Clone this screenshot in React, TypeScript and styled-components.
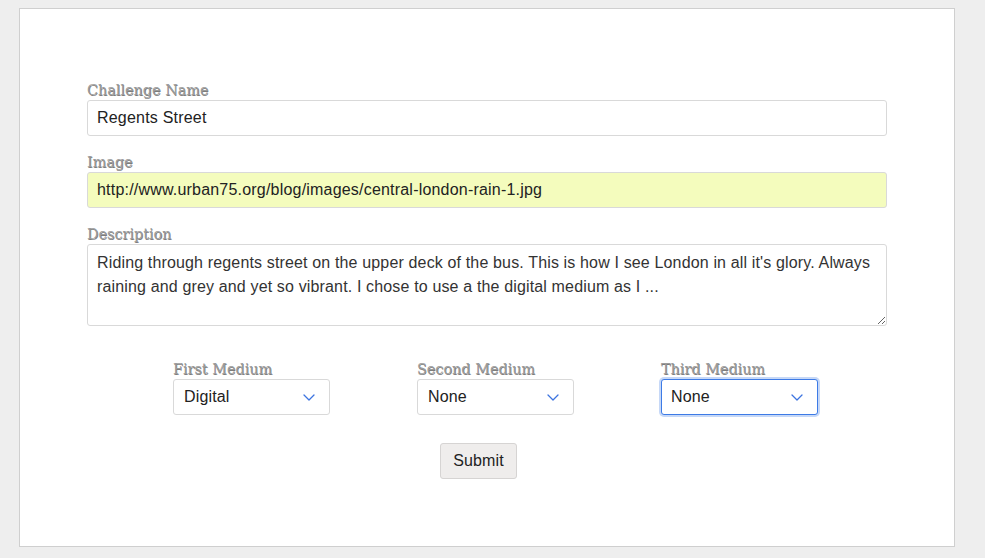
import React from "react";
import styled, { createGlobalStyle } from "styled-components";

const GlobalStyle = createGlobalStyle`
  html, body {
    margin: 0;
    padding: 0;
    background: #eeeeee;
  }
  body {
    font-family: "Liberation Sans", Arial, sans-serif;
  }
`;

const Page = styled.div`
  padding: 8px 0 0 19px;
  min-height: 558px;
  box-sizing: border-box;
`;

const Card = styled.div`
  width: 936px;
  height: 539px;
  box-sizing: border-box;
  background: #ffffff;
  border: 1px solid #cfcfcf;
  padding-top: 73px;
  display: flex;
  justify-content: center;
`;

const Form = styled.form`
  width: 800px;
  display: flex;
  flex-direction: column;
`;

const Group = styled.div<{ $last?: boolean }>`
  display: flex;
  flex-direction: column;
  margin-bottom: ${(p) => (p.$last ? "0" : "18px")};
`;

const Label = styled.label`
  display: block;
  font-family: "DejaVu Serif", "Liberation Serif", serif;
  font-weight: normal;
  font-size: 14.4px;
  line-height: 17px;
  height: 18px;
  color: #9c9c9c;
  text-shadow: 0.6px 0.6px 0 #7c7c7c;
  white-space: nowrap;
`;

const TextInput = styled.input<{ $autofill?: boolean }>`
  box-sizing: border-box;
  width: 100%;
  height: 36px;
  padding: 0 9px;
  font-family: "Liberation Sans", Arial, sans-serif;
  font-size: 16px;
  letter-spacing: 0.2px;
  color: #222222;
  background: ${(p) => (p.$autofill ? "#f4fcbd" : "#ffffff")};
  border: 1px solid #d9d9d9;
  border-radius: 3px;
  outline: none;
`;

const TextArea = styled.textarea`
  box-sizing: border-box;
  width: 100%;
  height: 82px;
  padding: 6px 9px;
  font-family: "Liberation Sans", Arial, sans-serif;
  font-size: 16px;
  letter-spacing: 0.15px;
  line-height: 24px;
  color: #333333;
  background: #ffffff;
  border: 1px solid #d9d9d9;
  border-radius: 3px;
  outline: none;
  resize: vertical;
  overflow: hidden;
`;

const MediumRow = styled.div`
  display: flex;
  gap: 87px;
  padding-left: 86px;
  margin-top: 35px;
`;

const MediumCol = styled.div`
  display: flex;
  flex-direction: column;
  width: 157px;
`;

const SelectBox = styled.div<{ $focused?: boolean }>`
  box-sizing: border-box;
  height: 36px;
  display: flex;
  align-items: center;
  justify-content: space-between;
  padding: 0 14px 0 ${(p) => (p.$focused ? "9px" : "10px")};
  border: ${(p) => (p.$focused ? "1.5px solid #3d7be6" : "1px solid #d9d9d9")};
  border-radius: 3px;
  box-shadow: ${(p) => (p.$focused ? "0 0 0 2px #c6d8f7" : "none")};
  font-size: 16px;
  letter-spacing: 0.15px;
  color: #222222;
  background: #ffffff;
`;

const ButtonRow = styled.div`
  display: flex;
  padding-left: 353px;
  margin-top: 28px;
`;

const SubmitButton = styled.button`
  box-sizing: border-box;
  width: 77px;
  height: 36px;
  font-family: "Liberation Sans", Arial, sans-serif;
  font-size: 16px;
  letter-spacing: 0.15px;
  color: #222222;
  background: #efedec;
  border: 1px solid #d6d4d3;
  border-radius: 3px;
`;

const Chevron = () => (
  <svg width="12" height="7" viewBox="0 0 12 7" fill="none">
    <path d="M1 1l5 5 5-5" stroke="#3d74e0" strokeWidth="1.3" strokeLinecap="round" strokeLinejoin="round" />
  </svg>
);

const Select = ({ value, focused }: { value: string; focused?: boolean }) => (
  <SelectBox $focused={focused}>
    <span>{value}</span>
    <Chevron />
  </SelectBox>
);

export default function App() {
  return (
    <>
      <GlobalStyle />
      <Page>
        <Card>
          <Form onSubmit={(e) => e.preventDefault()}>
            <Group>
              <Label>Challenge Name</Label>
              <TextInput readOnly value="Regents Street" />
            </Group>
            <Group>
              <Label>Image</Label>
              <TextInput
                $autofill
                readOnly
                value="http://www.urban75.org/blog/images/central-london-rain-1.jpg"
              />
            </Group>
            <Group $last>
              <Label>Description</Label>
              <TextArea
                readOnly
                value="Riding through regents street on the upper deck of the bus. This is how I see London in all it's glory. Always raining and grey and yet so vibrant. I chose to use a the digital medium as I ..."
              />
            </Group>
            <MediumRow>
              <MediumCol>
                <Label>First Medium</Label>
                <Select value="Digital" />
              </MediumCol>
              <MediumCol>
                <Label>Second Medium</Label>
                <Select value="None" />
              </MediumCol>
              <MediumCol>
                <Label>Third Medium</Label>
                <Select value="None" focused />
              </MediumCol>
            </MediumRow>
            <ButtonRow>
              <SubmitButton type="submit">Submit</SubmitButton>
            </ButtonRow>
          </Form>
        </Card>
      </Page>
    </>
  );
}
